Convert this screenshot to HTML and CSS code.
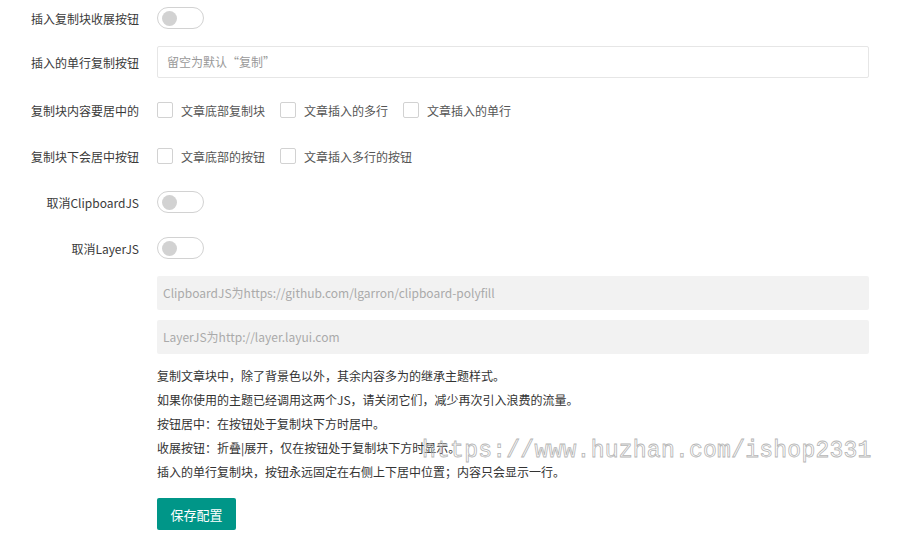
FILE: index.html
```html
<!DOCTYPE html>
<html lang="zh-CN">
<head>
<meta charset="utf-8">
<title>复制块设置</title>
<link rel="stylesheet" href="styles.css">
</head>
<body>
<div class="form">
  <div class="row r1">
    <div class="label">插入复制块收展按钮</div>
    <div class="field"><span class="switch"><i></i></span></div>
  </div>
  <div class="row r2">
    <div class="label">插入的单行复制按钮</div>
    <div class="field"><div class="input">留空为默认“复制”</div></div>
  </div>
  <div class="row">
    <div class="label">复制块内容要居中的</div>
    <div class="field">
      <span class="check"><span class="box"></span>文章底部复制块</span>
      <span class="check"><span class="box"></span>文章插入的多行</span>
      <span class="check"><span class="box"></span>文章插入的单行</span>
    </div>
  </div>
  <div class="row">
    <div class="label">复制块下会居中按钮</div>
    <div class="field">
      <span class="check"><span class="box"></span>文章底部的按钮</span>
      <span class="check"><span class="box"></span>文章插入多行的按钮</span>
    </div>
  </div>
  <div class="row">
    <div class="label">取消ClipboardJS</div>
    <div class="field"><span class="switch"><i></i></span></div>
  </div>
  <div class="row last">
    <div class="label">取消LayerJS</div>
    <div class="field"><span class="switch"><i></i></span></div>
  </div>
  <div class="block">
    <div class="note">ClipboardJS为https://github.com/lgarron/clipboard-polyfill</div>
    <div class="note">LayerJS为http://layer.layui.com</div>
    <div class="desc">
      <p>复制文章块中，除了背景色以外，其余内容多为的继承主题样式。</p>
      <p>如果你使用的主题已经调用这两个JS，请关闭它们，减少再次引入浪费的流量。</p>
      <p>按钮居中：在按钮处于复制块下方时居中。</p>
      <p>收展按钮：折叠|展开，仅在按钮处于复制块下方时显示。</p>
      <p>插入的单行复制块，按钮永远固定在右侧上下居中位置；内容只会显示一行。</p>
    </div>
    <button class="btn">保存配置</button>
  </div>
</div>
<div class="watermark">https://www.huzhan.com/ishop2331</div>
</body>
</html>
```

FILE: styles.css
```css
html, body {
  margin: 0;
  padding: 0;
  background: #fff;
}
body {
  font-family: "Noto Sans CJK SC", "Microsoft YaHei", sans-serif;
  font-size: 12px;
  color: #333;
  position: relative;
  width: 900px;
  height: 558px;
  overflow: hidden;
}
.form {
  padding: 2px 31px 0 0;
}
.row {
  display: flex;
  align-items: center;
  height: 32px;
  margin-bottom: 14px;
}
.r1 { margin-bottom: 12px; }
.r2 { margin-bottom: 16px; }
.row.last { margin-bottom: 12px; }
.label {
  width: 157px;
  box-sizing: border-box;
  padding-right: 18px;
  text-align: right;
  color: #3a3a3a;
  white-space: nowrap;
  flex: none;
}
.field {
  flex: 1;
  display: flex;
  align-items: center;
}
.switch {
  display: inline-block;
  position: relative;
  width: 47px;
  height: 22px;
  box-sizing: border-box;
  border: 1px solid #d2d2d2;
  border-radius: 11px;
  background: #fff;
}
.switch i {
  position: absolute;
  left: 4px;
  top: 3px;
  width: 15px;
  height: 15px;
  border-radius: 50%;
  background: #d2d2d2;
}
.input {
  width: 100%;
  height: 32px;
  box-sizing: border-box;
  border: 1px solid #e6e6e6;
  border-radius: 2px;
  padding-left: 9px;
  line-height: 30px;
  color: #999;
}
.check {
  display: inline-flex;
  align-items: center;
  margin-right: 15px;
  color: #555;
}
.box {
  width: 16px;
  height: 16px;
  box-sizing: border-box;
  border: 1px solid #d2d2d2;
  border-radius: 2px;
  margin-right: 8px;
  background: #fff;
}
.block {
  margin-left: 157px;
}
.note {
  height: 34px;
  line-height: 34px;
  background: #f2f2f2;
  border-radius: 2px;
  padding-left: 6px;
  color: #aaa;
  margin-bottom: 10px;
}
.desc {
  color: #333;
  margin-bottom: 14px;
}
.desc p {
  margin: 0;
  line-height: 24px;
}
.btn {
  display: block;
  width: 79px;
  height: 32px;
  border: none;
  border-radius: 2px;
  background: #009688;
  color: #fff;
  font-family: "Noto Sans CJK SC", "Microsoft YaHei", sans-serif;
  font-size: 13px;
  padding: 0;
}
.watermark {
  position: absolute;
  left: 422px;
  top: 436px;
  font-family: "Liberation Mono", monospace;
  font-size: 23px;
  letter-spacing: 0.25px;
  line-height: 30px;
  color: transparent;
  -webkit-text-stroke: 0.8px #b5b5b5;
  white-space: nowrap;
  pointer-events: none;
}
```
